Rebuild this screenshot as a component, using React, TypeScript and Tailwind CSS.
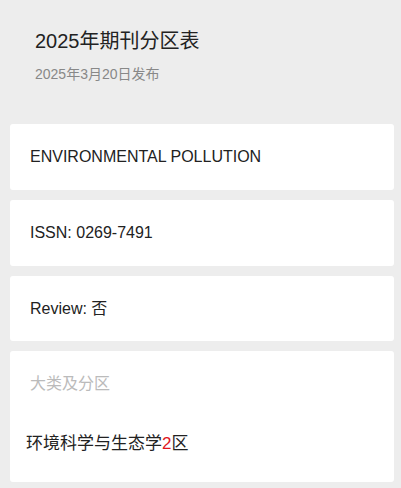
export default function App() {
  const font = { fontFamily: '"Liberation Sans", Arial, "Noto Sans CJK SC", sans-serif' };
  return (
    <div className="w-[401px] h-[488px] bg-[#ededed] overflow-hidden" style={font}>
      <div className="pl-[35px] pt-[27px] pb-[40px]">
        <div className="text-[20px] leading-[28px] text-[#222]">2025年期刊分区表</div>
        <div className="mt-[9px] text-[14px] leading-[20px] text-[#888]">2025年3月20日发布</div>
      </div>
      <div className="flex flex-col gap-[10px] ml-[10px] w-[384px]">
        <div className="bg-white rounded-[3px] h-[66px] flex items-center pl-[20px] text-[16px] text-[#222]">
          ENVIRONMENTAL POLLUTION
        </div>
        <div className="bg-white rounded-[3px] h-[66px] flex items-center pl-[20px] text-[16px] text-[#222]">
          ISSN: 0269-7491
        </div>
        <div className="bg-white rounded-[3px] h-[65px] flex items-center pl-[20px] text-[16px] text-[#222]">
          Review: 否
        </div>
        <div className="bg-white rounded-[3px] h-[131px] flex flex-col">
          <div className="pl-[20px] pt-[20px] text-[16px] leading-[26px] text-[#bbb]">大类及分区</div>
          <div className="pl-[16px] mt-[34px] text-[17px] leading-[26px] text-[#222]">
            环境科学与生态学<span className="text-[#e0161e]">2</span>区
          </div>
        </div>
      </div>
    </div>
  );
}
